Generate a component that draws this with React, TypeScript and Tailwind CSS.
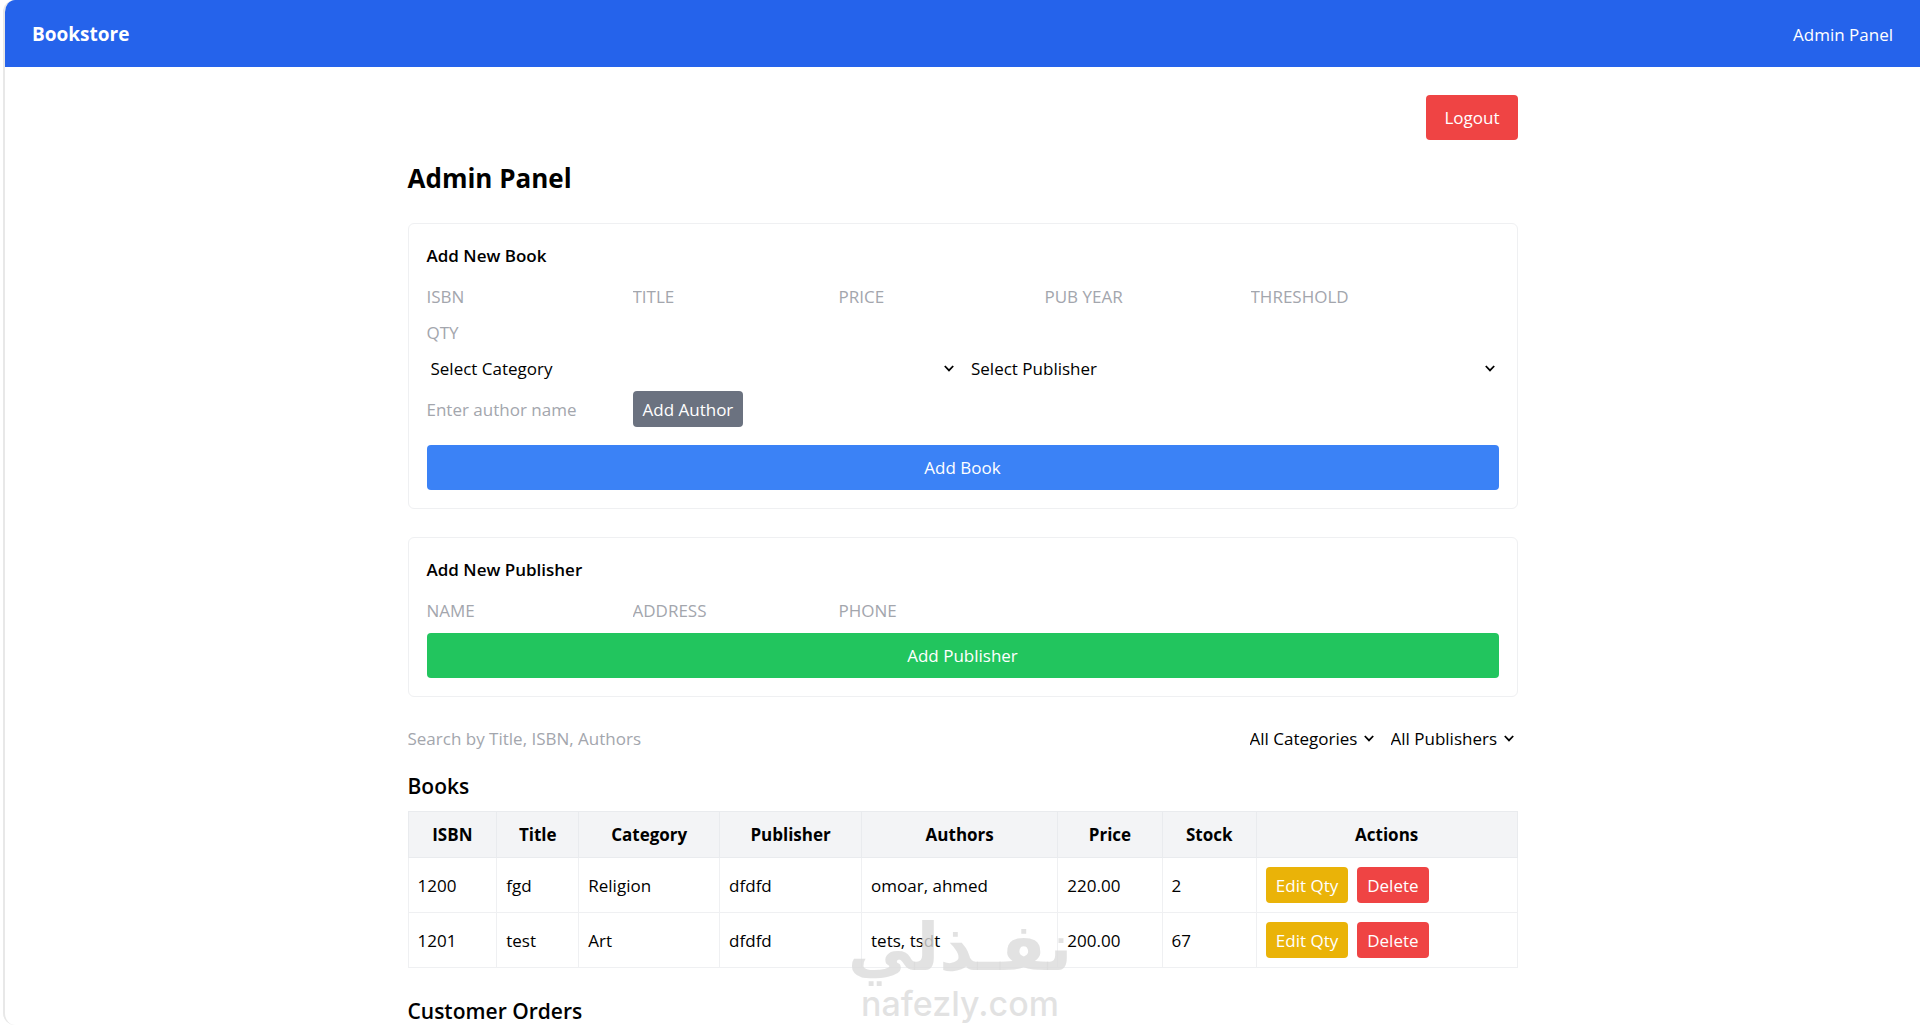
import { useState } from 'react'
import type { ReactNode } from 'react'
import clsx from 'clsx'

type Book = {
  isbn: string
  title: string
  category: string
  publisher: string
  authors: string
  price: string
  stock: number
}

const books: Book[] = [
  { isbn: '1200', title: 'fgd', category: 'Religion', publisher: 'dfdfd', authors: 'omoar, ahmed', price: '220.00', stock: 2 },
  { isbn: '1201', title: 'test', category: 'Art', publisher: 'dfdfd', authors: 'tets, tsdt', price: '200.00', stock: 67 },
]

const bookFields = ['ISBN', 'TITLE', 'PRICE', 'PUB YEAR', 'THRESHOLD', 'QTY']
const publisherFields = ['NAME', 'ADDRESS', 'PHONE']
const categories = ['Religion', 'Art']
const publishers = ['dfdfd']

const columns = [
  { label: 'ISBN', width: 'w-[8%]' },
  { label: 'Title', width: 'w-[7.4%]' },
  { label: 'Category', width: 'w-[12.7%]' },
  { label: 'Publisher', width: 'w-[12.8%]' },
  { label: 'Authors', width: 'w-[17.7%]' },
  { label: 'Price', width: 'w-[9.4%]' },
  { label: 'Stock', width: 'w-[8.5%]' },
  { label: 'Actions', width: 'w-[23.5%]' },
]

export default function App() {
  const [search, setSearch] = useState('')
  const [category, setCategory] = useState('')
  const [publisher, setPublisher] = useState('')

  const visibleBooks = books.filter(
    (b) =>
      `${b.title} ${b.isbn} ${b.authors}`.toLowerCase().includes(search.toLowerCase()) &&
      (!category || b.category === category) &&
      (!publisher || b.publisher === publisher)
  )

  return (
    <div className="relative h-screen pl-[3px] bg-white text-black font-['Segoe_UI','Open_Sans',sans-serif] text-[17px] leading-[27px]">
      <div className="flex h-full flex-col overflow-hidden rounded-l-xl border-l-2 border-[#e8e8e8]">
        {/* Navbar */}
        <nav className="flex shrink-0 items-center justify-between bg-[#2563eb] px-[27px] pt-[21px] pb-[19px] text-white">
          <a href="#" className="text-[19px] font-bold">Bookstore</a>
          <a href="#admin">Admin Panel</a>
        </nav>

        <main className="flex-1 overflow-y-auto px-7 pt-7 [scrollbar-width:none]">
          <div className="mx-auto max-w-[1110px]">
            <div className="flex justify-end">
              <Button className="bg-[#ef4444] px-[18px] py-[9px]">Logout</Button>
            </div>

            <h1 className="mt-5 mb-[27px] text-[26px] leading-9 font-bold">Admin Panel</h1>

            {/* Add book */}
            <Card title="Add New Book">
              <div className="flex flex-wrap gap-[9px]">
                {bookFields.map((f) => (
                  <TextInput key={f} placeholder={f} />
                ))}
              </div>
              <div className="mt-[9px] grid grid-cols-2 gap-[9px]">
                <Select placeholder="Select Category" options={categories} />
                <Select placeholder="Select Publisher" options={publishers} />
              </div>
              <div className="mt-[9px] flex items-center gap-[9px]">
                <TextInput placeholder="Enter author name" />
                <Button className="h-9 bg-[#6b7280] px-2.5">Add Author</Button>
              </div>
              <Button className="mt-[18px] w-full bg-[#3b82f6] py-[9px]">Add Book</Button>
            </Card>

            {/* Add publisher */}
            <Card title="Add New Publisher">
              <div className="flex flex-wrap gap-[9px]">
                {publisherFields.map((f) => (
                  <TextInput key={f} placeholder={f} />
                ))}
              </div>
              <Button className="mt-[9px] w-full bg-[#22c55e] py-[9px]">Add Publisher</Button>
            </Card>

            {/* Filters */}
            <div className="mb-[18px] flex gap-[9px]">
              <input
                type="search"
                aria-label="Search books"
                placeholder="Search by Title, ISBN, Authors"
                value={search}
                onChange={(e) => setSearch(e.target.value)}
                className="min-w-0 flex-1 placeholder:text-[#a3a6ad] focus:outline-none"
              />
              <Select placeholder="All Categories" options={categories} value={category} onChange={setCategory} compact />
              <Select placeholder="All Publishers" options={publishers} value={publisher} onChange={setPublisher} compact />
            </div>

            <h2 className="mb-[9px] text-[21px] leading-8 font-semibold">Books</h2>
            <table className="mb-[29px] w-full table-fixed border-collapse">
              <thead>
                <tr className="bg-gray-100">
                  {columns.map((c) => (
                    <th key={c.label} scope="col" className={clsx('border border-[#e9ebee] p-[9px] text-center font-bold', c.width)}>
                      {c.label}
                    </th>
                  ))}
                </tr>
              </thead>
              <tbody>
                {visibleBooks.map((b) => (
                  <tr key={b.isbn}>
                    <Cell>{b.isbn}</Cell>
                    <Cell>{b.title}</Cell>
                    <Cell>{b.category}</Cell>
                    <Cell>{b.publisher}</Cell>
                    <Cell>{b.authors}</Cell>
                    <Cell>{b.price}</Cell>
                    <Cell>{b.stock}</Cell>
                    <Cell>
                      <div className="flex gap-[9px]">
                        <Button className="h-9 bg-[#eab308] px-2.5">Edit Qty</Button>
                        <Button className="h-9 bg-[#ef4444] px-2.5">Delete</Button>
                      </div>
                    </Cell>
                  </tr>
                ))}
              </tbody>
            </table>

            <h2 className="text-[21px] leading-7 font-semibold">Customer Orders</h2>
          </div>
        </main>
      </div>

      <Watermark />
    </div>
  )
}

function Card({ title, children }: { title: string; children: ReactNode }) {
  return (
    <section className="mb-7 rounded-md border border-[#eff0f2] p-[18px]">
      <h2 className="mb-[14px] font-semibold">{title}</h2>
      {children}
    </section>
  )
}

function Button({ className, children }: { className?: string; children: ReactNode }) {
  return (
    <button type="button" className={clsx('block cursor-pointer rounded text-white', className)}>
      {children}
    </button>
  )
}

function TextInput({ placeholder }: { placeholder: string }) {
  return (
    <input
      type="text"
      aria-label={placeholder}
      placeholder={placeholder}
      className="h-[27px] w-[197px] placeholder:text-[#a3a6ad] focus:outline-none"
    />
  )
}

function Select({
  placeholder,
  options,
  value,
  onChange,
  compact,
}: {
  placeholder: string
  options: string[]
  value?: string
  onChange?: (value: string) => void
  compact?: boolean
}) {
  return (
    <div className="relative">
      <select
        aria-label={placeholder}
        value={value}
        onChange={(e) => onChange?.(e.target.value)}
        className={clsx('block h-[27px] appearance-none bg-transparent pl-1 focus:outline-none', compact ? 'pr-5' : 'w-full pr-6')}
      >
        <option value="">{placeholder}</option>
        {options.map((o) => (
          <option key={o}>{o}</option>
        ))}
      </select>
      <svg
        viewBox="0 0 10 7"
        className="pointer-events-none absolute top-2.5 right-1 h-[7px] w-2.5"
        fill="none"
        stroke="currentColor"
        strokeWidth="1.8"
      >
        <path d="M0.8 1 5 5.4 9.2 1" />
      </svg>
    </div>
  )
}

function Cell({ children }: { children: ReactNode }) {
  return <td className="border border-[#eff0f2] p-[9px]">{children}</td>
}

function Watermark() {
  return (
    <div className="pointer-events-none absolute inset-x-0 bottom-0 flex flex-col items-center text-[#dbdbdb]/80 select-none">
      <span lang="ar" dir="rtl" className="font-['DejaVu_Sans',sans-serif] text-[66px] leading-[70px] font-bold">نفـذلي</span>
      <span className="font-['Inter',sans-serif] text-[34px] leading-[42px] font-medium">nafezly.com</span>
    </div>
  )
}
